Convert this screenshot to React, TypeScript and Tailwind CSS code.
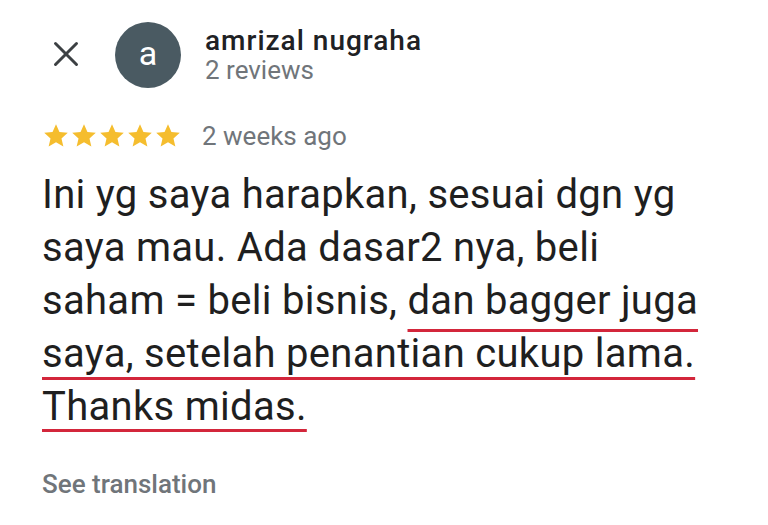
import { X } from "lucide-react";

const Star = () => (
  <svg viewBox="0 0 24 24" className="w-[28px] h-[28px]" fill="#f5bd2e">
    <path d="M12 2l2.95 6.55 7.15.7-5.4 4.8 1.6 7.05L12 17.4l-6.3 3.7 1.6-7.05-5.4-4.8 7.15-.7z" />
  </svg>
);

const mark = "underline decoration-[#d3263b] decoration-[3px]";

export default function App() {
  return (
    <div className="w-[768px] h-[525px] bg-white overflow-hidden font-['Roboto',sans-serif]">
      <div className="flex items-start pt-[22px] pl-[45px]">
        <X className="mt-[11px] w-[42px] h-[42px] text-[#3c4043]" strokeWidth={1.7} />
        <div className="ml-[28px] w-[66px] h-[66px] rounded-full bg-[#4a5a62] flex items-center justify-center">
          <span className="text-white text-[34px] leading-none -mt-[4px]">a</span>
        </div>
        <div className="ml-[24px] mt-[4px] flex flex-col">
          <span className="text-[28px] leading-[30px] text-[#202124] font-medium tracking-[1px]">
            amrizal nugraha
          </span>
          <span className="text-[26px] leading-[28px] text-[#70757a]">2 reviews</span>
        </div>
      </div>

      <div className="flex items-start mt-[34px] pl-[42px]">
        <div className="flex">
          <Star />
          <Star />
          <Star />
          <Star />
          <Star />
        </div>
        <span className="ml-[20px] text-[26px] leading-[28px] text-[#70757a]">2 weeks ago</span>
      </div>

      <p className="mt-[18px] pl-[42px] text-[40px] leading-[53px] text-[#1f1f1f] tracking-[0.3px]">
        <span className="block">Ini yg saya harapkan, sesuai dgn yg</span>
        <span className="block">saya mau. Ada dasar2 nya, beli</span>
        <span className="block">
          saham = beli bisnis,{" "}
          <span className={`${mark} underline-offset-[15px]`}>dan bagger juga</span>
        </span>
        <span className="block">
          <span className={`${mark} underline-offset-[10px]`}>saya, setelah penantian cukup lama.</span>
        </span>
        <span className="block">
          <span className={`${mark} underline-offset-[9px]`}>Thanks midas.</span>
        </span>
      </p>

      <div className="mt-[36px] pl-[42px] text-[26px] leading-[30px] text-[#70757a] font-medium">
        See translation
      </div>
    </div>
  );
}
